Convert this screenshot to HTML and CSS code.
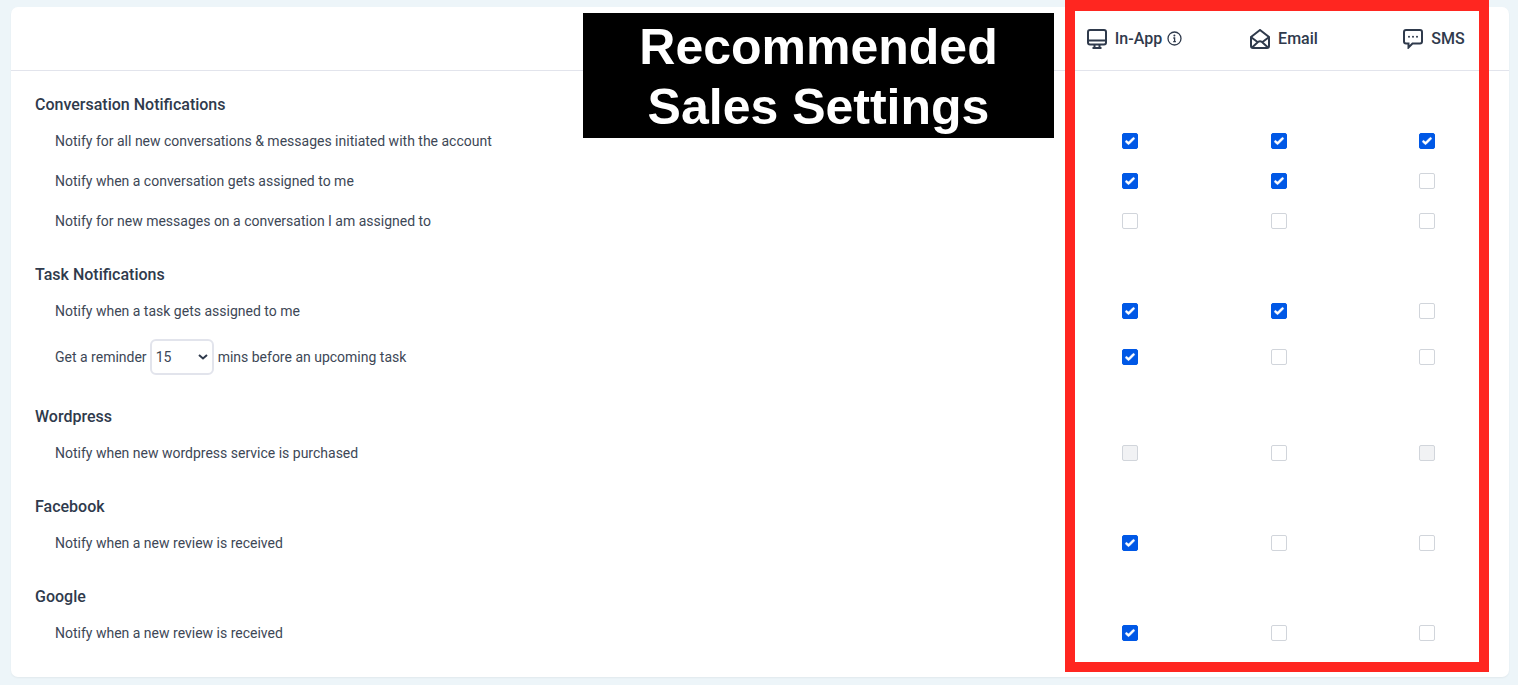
FILE: index.html
```html
<!DOCTYPE html>
<html lang="en">
<head>
    <meta charset="UTF-8">
    <meta name="viewport" content="width=device-width, initial-scale=1.0">
    <title>Notification Settings</title>
    <link rel="stylesheet" href="styles.css">
</head>
<body>
    <div class="card">
        <div class="card-header">
            <div class="channel">
                <svg class="channel-icon" viewBox="0 0 20 20"><rect x="1" y="1" width="18" height="14.5" rx="2"/><path d="M1 11.500h18M7.500 15.500v3M12.500 15.500v3M5.500 19h9"/></svg>
                <span>In-App</span>
                <svg class="info-icon" viewBox="0 0 15 15"><circle cx="7.500" cy="7.500" r="6.500"/><path d="M6.300 7h1.300v3.600M6.200 10.700h2.700"/><circle class="dot" cx="7.400" cy="4.500" r="1"/></svg>
            </div>
            <div class="channel">
                <svg class="channel-icon" viewBox="0 0 20 20"><path d="M1 8l9-7 9 7v9a2 2 0 0 1-2 2H3a2 2 0 0 1-2-2z"/><path d="M1.500 8.500L7.500 13M18.500 8.500L12.500 13M2 18.500l6-5.500q2-1.400 4 0l6 5.500"/></svg>
                <span>Email</span>
            </div>
            <div class="channel">
                <svg class="channel-icon" viewBox="0 0 20 20"><path d="M3 1h14a2 2 0 0 1 2 2v9.500a2 2 0 0 1-2 2H9.500L5.500 18.500v-4H3a2 2 0 0 1-2-2V3a2 2 0 0 1 2-2z"/><circle class="dot" cx="6" cy="7.800" r="1"/><circle class="dot" cx="10" cy="7.800" r="1"/><circle class="dot" cx="14" cy="7.800" r="1"/></svg>
                <span>SMS</span>
            </div>
        </div>

        <div class="card-body">
            <h3>Conversation Notifications</h3>
            <div class="row">
                <div class="row-label">Notify for all new conversations &amp; messages initiated with the account</div>
                <div class="checks"><input type="checkbox" checked><input type="checkbox" checked><input type="checkbox" checked></div>
            </div>
            <div class="row">
                <div class="row-label">Notify when a conversation gets assigned to me</div>
                <div class="checks"><input type="checkbox" checked><input type="checkbox" checked><input type="checkbox"></div>
            </div>
            <div class="row">
                <div class="row-label">Notify for new messages on a conversation I am assigned to</div>
                <div class="checks"><input type="checkbox"><input type="checkbox"><input type="checkbox"></div>
            </div>

            <h3>Task Notifications</h3>
            <div class="row">
                <div class="row-label">Notify when a task gets assigned to me</div>
                <div class="checks"><input type="checkbox" checked><input type="checkbox" checked><input type="checkbox"></div>
            </div>
            <div class="row row-tall">
                <div class="row-label row-label-select">
                    <span>Get a reminder</span>
                    <select class="reminder">
                        <option>15</option>
                        <option>30</option>
                        <option>60</option>
                    </select>
                    <span>mins before an upcoming task</span>
                </div>
                <div class="checks"><input type="checkbox" checked><input type="checkbox"><input type="checkbox"></div>
            </div>

            <h3>Wordpress</h3>
            <div class="row">
                <div class="row-label">Notify when new wordpress service is purchased</div>
                <div class="checks"><input type="checkbox" disabled><input type="checkbox"><input type="checkbox" disabled></div>
            </div>

            <h3>Facebook</h3>
            <div class="row">
                <div class="row-label">Notify when a new review is received</div>
                <div class="checks"><input type="checkbox" checked><input type="checkbox"><input type="checkbox"></div>
            </div>

            <h3>Google</h3>
            <div class="row">
                <div class="row-label">Notify when a new review is received</div>
                <div class="checks"><input type="checkbox" checked><input type="checkbox"><input type="checkbox"></div>
            </div>
        </div>
    </div>

    <div class="banner">Recommended<br>Sales Settings</div>
    <div class="highlight"></div>
</body>
</html>
```

FILE: styles.css
```css
html, body {
    height: 100%;
}
body {
    margin: 0;
    padding: 7px 9px 8px 11px;
    box-sizing: border-box;
    position: relative;
    overflow: hidden;
    background: #edf5f9;
    font-family: Roboto, "Liberation Sans", sans-serif;
    font-size: 14px;
    color: #3d4756;
}
.card {
    height: 670px;
    background: white;
    border-radius: 7px;
    box-shadow: 0 1px 2px rgba(0,0,0,0.05);
}
.card-header {
    height: 64px;
    box-sizing: border-box;
    border-bottom: 1px solid #e2e4ec;
    display: grid;
    grid-template-columns: repeat(3, 150px);
    justify-content: end;
    align-items: center;
}
.channel {
    display: flex;
    align-items: center;
    justify-content: center;
    font-size: 16px;
    font-weight: 500;
    color: #2f3a4c;
}
.channel-icon {
    width: 20px;
    height: 20px;
    margin-right: 8px;
    fill: none;
    stroke: #2f3a4c;
    stroke-width: 2;
}
.info-icon {
    width: 15px;
    height: 15px;
    margin: 0 -1px 0 5px;
    fill: none;
    stroke: #2f3a4c;
    stroke-width: 1.3;
}
.dot {
    fill: #2f3a4c;
    stroke: none;
}
h3 {
    margin: 0;
    padding: 24px 0 6px 24px;
    font-size: 16px;
    font-weight: 500;
    line-height: 20px;
    color: #2f3a4c;
}
.row {
    height: 40px;
    display: flex;
    align-items: center;
    justify-content: space-between;
    padding: 0 74px 0 44px;
}
.row-tall {
    height: 52px;
}
.row-label-select {
    display: flex;
    align-items: center;
    gap: 4px;
}
.row-label-select span:first-child {
    margin-right: -1px;
}
.checks {
    display: grid;
    grid-template-columns: 149px 148px 16px;
    align-items: center;
}
input[type="checkbox"] {
    appearance: none;
    display: block;
    width: 16px;
    height: 16px;
    margin: 0;
    box-sizing: border-box;
    background: white;
    border: 1px solid #d1d5db;
    border-radius: 2px;
}
input[type="checkbox"]:checked {
    background: #0058e6 url("data:image/svg+xml,%3Csvg viewBox='0 0 16 16' fill='white' stroke='white' stroke-width='.6' xmlns='http://www.w3.org/2000/svg'%3E%3Cpath d='M12.207 4.793a1 1 0 010 1.414l-5 5a1 1 0 01-1.414 0l-2-2a1 1 0 011.414-1.414L6.500 9.086l4.293-4.293a1 1 0 011.414 0z'/%3E%3C/svg%3E") center / 16px no-repeat;
    border-color: #0058e6;
}
input[type="checkbox"]:disabled {
    background: #f1f2f4;
}
.reminder {
    appearance: none;
    width: 64px;
    height: 36px;
    padding: 0 0 0 4px;
    box-sizing: border-box;
    font: inherit;
    color: inherit;
    border: 2px solid #e2e4ec;
    border-radius: 6px;
    background: white url("data:image/svg+xml,%3Csvg viewBox='0 0 10 6' fill='none' stroke='%232f3a4c' stroke-width='2' xmlns='http://www.w3.org/2000/svg'%3E%3Cpath d='M1 1l4 3.500L9 1'/%3E%3C/svg%3E") right 4px center / 10px 6px no-repeat;
}
.banner {
    position: absolute;
    left: 583px;
    top: 13px;
    width: 471px;
    height: 125px;
    padding-top: 4px;
    box-sizing: border-box;
    background: black;
    color: white;
    font-family: "Liberation Sans", Arial, sans-serif;
    font-size: 50px;
    font-weight: 700;
    line-height: 60px;
    text-align: center;
}
.highlight {
    position: absolute;
    left: 1065px;
    top: 0;
    width: 424px;
    height: 672px;
    box-sizing: border-box;
    border: 10px solid #ff2620;
    border-top-width: 11px;
}
```
